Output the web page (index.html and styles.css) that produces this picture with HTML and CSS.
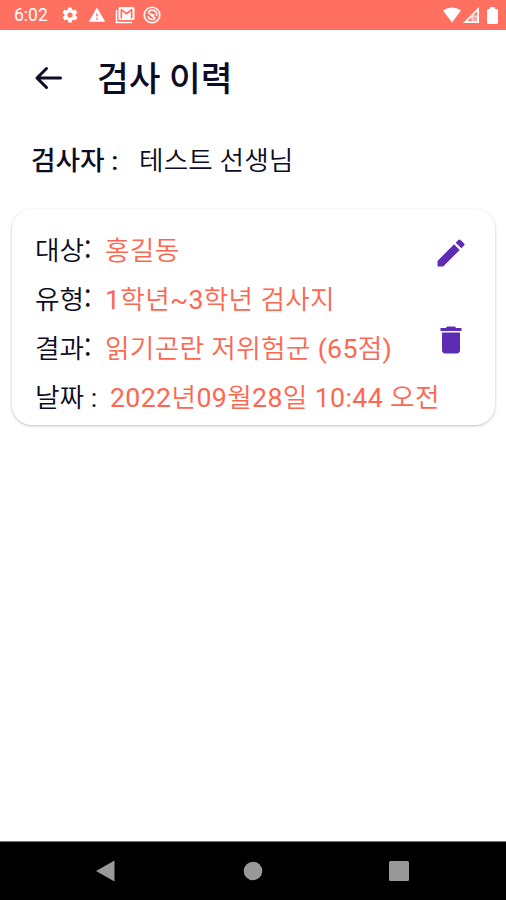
FILE: index.html
```
<!DOCTYPE html>
<html lang="ko">
<head>
  <meta charset="UTF-8">
  <meta name="viewport" content="width=device-width, initial-scale=1">
  <title>검사 이력</title>
  <link rel="stylesheet" href="styles.css">
</head>
<body>
  <div class="status-bar">
    <span class="time">6:02</span>
    <div class="notifications">
      <svg width="18" height="18" viewBox="0 0 24 24"><path fill-rule="evenodd" d="M19.4 13c0-.3.1-.6.1-1s0-.7-.1-1l2.1-1.6c.2-.2.2-.4.1-.6l-2-3.5c-.1-.2-.4-.3-.6-.2l-2.500 1c-.5-.4-1.100-.7-1.700-1l-.4-2.600c0-.3-.2-.5-.5-.5h-4c-.3 0-.5.2-.5.4l-.4 2.700c-.6.2-1.100.6-1.700 1l-2.500-1c-.2-.1-.5 0-.6.2l-2 3.500c-.1.200 0 .500.100.600L4.600 11c0 .300-.1.700-.1 1s0 .700.100 1l-2.100 1.600c-.2.200-.2.400-.1.600l2 3.500c.100.200.400.300.600.200l2.500-1c.500.400 1.100.700 1.700 1l.4 2.600c0 .300.200.500.500.500h4c.300 0 .500-.2.500-.4l.4-2.700c.600-.2 1.100-.6 1.700-1l2.500 1c.200.100.500 0 .600-.2l2-3.500c.100-.2 0-.5-.1-.6zM12 15.500a3.500 3.500 0 1 1 0-7 3.500 3.500 0 0 1 0 7z"/></svg>
      <svg width="18" height="18" viewBox="0 0 24 24"><path d="M1 21h22L12 2zm12-3h-2v-2h2zm0-4h-2v-4h2z"/></svg>
      <svg class="mail" width="20" height="18" viewBox="0 0 20 18"><path d="M1.500 4v12.500H17" fill="none" stroke="#fff" stroke-width="1.500"/><path fill-rule="evenodd" d="M5 1h13a1.500 1.500 0 0 1 1.500 1.500v10A1.500 1.500 0 0 1 18 14H5a1.500 1.500 0 0 1-1.500-1.500v-10A1.500 1.500 0 0 1 5 1zm.5 2v9.500h1.700V5.500l4.300 3.200 4.300-3.200v7h1.700V3h-1.200l-4.800 3.600L6.700 3z"/></svg>
      <svg width="18" height="18" viewBox="0 0 18 18" fill="none" stroke="#fff"><circle cx="9" cy="9" r="7.800" stroke-width="1.600"/><path d="M5.200 6.300A4.600 4.600 0 0 1 13.500 10M12.300 12.300a4.600 4.600 0 0 1-7.500-2M5.200 6.300l7 6M8.300 8.500l3 .5" stroke-width="1.600"/></svg>
    </div>
    <div class="system">
      <svg width="18" height="16" viewBox="0 0 18 16"><path d="M0 3.500Q9-2.500 18 3.500L9 15.500z"/></svg>
      <svg width="16" height="16" viewBox="0 0 16 16"><path fill-rule="evenodd" d="M0 16 16 0v16zM4.500 14.200H8.500V8.500h5.700V4.300z"/><path fill="#ff7060" d="M9.500 9.500h4.700v4.700H9.500z" opacity=".6"/></svg>
      <svg class="battery" width="11" height="17" viewBox="0 0 11 17"><path d="M3 0h5v2h1.500A1.500 1.500 0 0 1 11 3.500v12A1.500 1.500 0 0 1 9.500 17h-8A1.500 1.500 0 0 1 0 15.500v-12A1.500 1.500 0 0 1 1.500 2H3z"/></svg>
    </div>
  </div>

  <header class="app-bar">
    <svg class="back" width="28" height="24" viewBox="0 0 28 24"><path d="M12.500 2.500 3 12l9.500 9.500M3 12h23.500"/></svg>
    <h1>검사 이력</h1>
  </header>

  <div class="examiner">
    <span class="examiner-label">검사자 :</span>
    <span class="examiner-name">테스트 선생님</span>
  </div>

  <div class="card">
    <div class="info">
      <div class="row"><span class="label">대상<span class="colon">:</span></span><span class="value">홍길동</span></div>
      <div class="row"><span class="label">유형<span class="colon">:</span></span><span class="value">1학년~3학년 검사지</span></div>
      <div class="row"><span class="label">결과<span class="colon">:</span></span><span class="value">읽기곤란 저위험군 (65점)</span></div>
      <div class="row"><span class="label date">날짜 :</span><span class="value">2022년09월28일 10:44 오전</span></div>
    </div>
    <div class="actions">
      <svg width="36" height="36" viewBox="0 0 24 24"><path d="M3 17.250V21h3.750L17.810 9.940l-3.750-3.750zM20.710 7.040a1 1 0 0 0 0-1.410l-2.340-2.340a1 1 0 0 0-1.410 0l-1.830 1.830 3.750 3.750z"/></svg>
      <svg width="36" height="36" viewBox="0 0 24 24"><path d="M6 19c0 1.100.9 2 2 2h8c1.100 0 2-.9 2-2V7H6zM19 4h-3.500l-1-1h-5l-1 1H5v2h14z"/></svg>
    </div>
  </div>

  <nav class="nav-bar">
    <svg width="20" height="22" viewBox="0 0 20 22"><path d="M0 11 18.500.5v21z"/></svg>
    <svg width="20" height="20" viewBox="0 0 20 20"><circle cx="10" cy="10" r="9.300"/></svg>
    <svg width="20" height="20" viewBox="0 0 20 20"><rect width="20" height="20" rx="1.500"/></svg>
  </nav>
</body>
</html>
```
FILE: styles.css
```
* {
  box-sizing: border-box;
}
body {
  font-family: Roboto, "Noto Sans CJK KR", sans-serif;
  display: flex;
  flex-direction: column;
  height: 900px;
  margin: 0;
  background-color: #fff;
  color: #0c0c24;
  font-size: 26.7px;
  overflow: hidden;
}
svg {
  display: block;
  flex: none;
}
.status-bar {
  display: flex;
  align-items: center;
  height: 30px;
  padding: 0 8px 0 14px;
  background-color: #ff7060;
  color: #fff;
  fill: #fff;
}
.time {
  width: 47px;
  font-size: 17.5px;
}
.notifications {
  display: flex;
  align-items: center;
  gap: 9px;
}
.mail {
  margin-right: -1px;
}
.system {
  display: flex;
  align-items: center;
  gap: 2px;
  margin-left: auto;
}
.battery {
  margin-left: 6px;
}
.app-bar {
  display: flex;
  align-items: center;
  height: 96px;
  padding-left: 34px;
}
.back {
  fill: none;
  stroke: #0c0c24;
  stroke-width: 3;
  stroke-linejoin: round;
  stroke-linecap: round;
}
h1 {
  margin: 2px 0 0 35px;
  font-size: 34.5px;
  font-weight: 500;
  line-height: 1;
}
.examiner {
  display: flex;
  align-items: center;
  height: 64px;
  padding-left: 31px;
}
.examiner-label {
  width: 108px;
  font-weight: 500;
}
.examiner-name {
  font-weight: 350;
  letter-spacing: 0.1px;
}
.card {
  display: flex;
  height: 216px;
  margin: 19px 11px 0 12px;
  padding: 15px 26px 0 23px;
  border-radius: 20px;
  box-shadow: 0 1px 3px rgba(0, 0, 0, 0.25);
}
.info {
  width: 401px;
  flex: none;
  font-family: Roboto, "Noto Sans CJK KR DemiLight", "Noto Sans CJK KR", sans-serif;
}
.row {
  display: flex;
  align-items: center;
  height: 49px;
  white-space: nowrap;
}
.label {
  width: 70px;
  flex: none;
}
.colon {
  font-family: "Noto Sans CJK KR", sans-serif;
}
.date {
  width: 75px;
}
.value {
  color: #ff6650;
  letter-spacing: 0.3px;
}
.date + .value {
  letter-spacing: 0.37px;
}
.actions {
  display: flex;
  flex-direction: column;
  gap: 51px;
  margin-left: -3px;
  padding-top: 11px;
  fill: #5e2bb3;
}
.nav-bar {
  display: flex;
  align-items: center;
  justify-content: space-between;
  height: 59px;
  margin-top: auto;
  padding: 0 97px 0 96px;
  border-top: 1px solid #777;
  background-color: #000;
  fill: #999;
}
```
